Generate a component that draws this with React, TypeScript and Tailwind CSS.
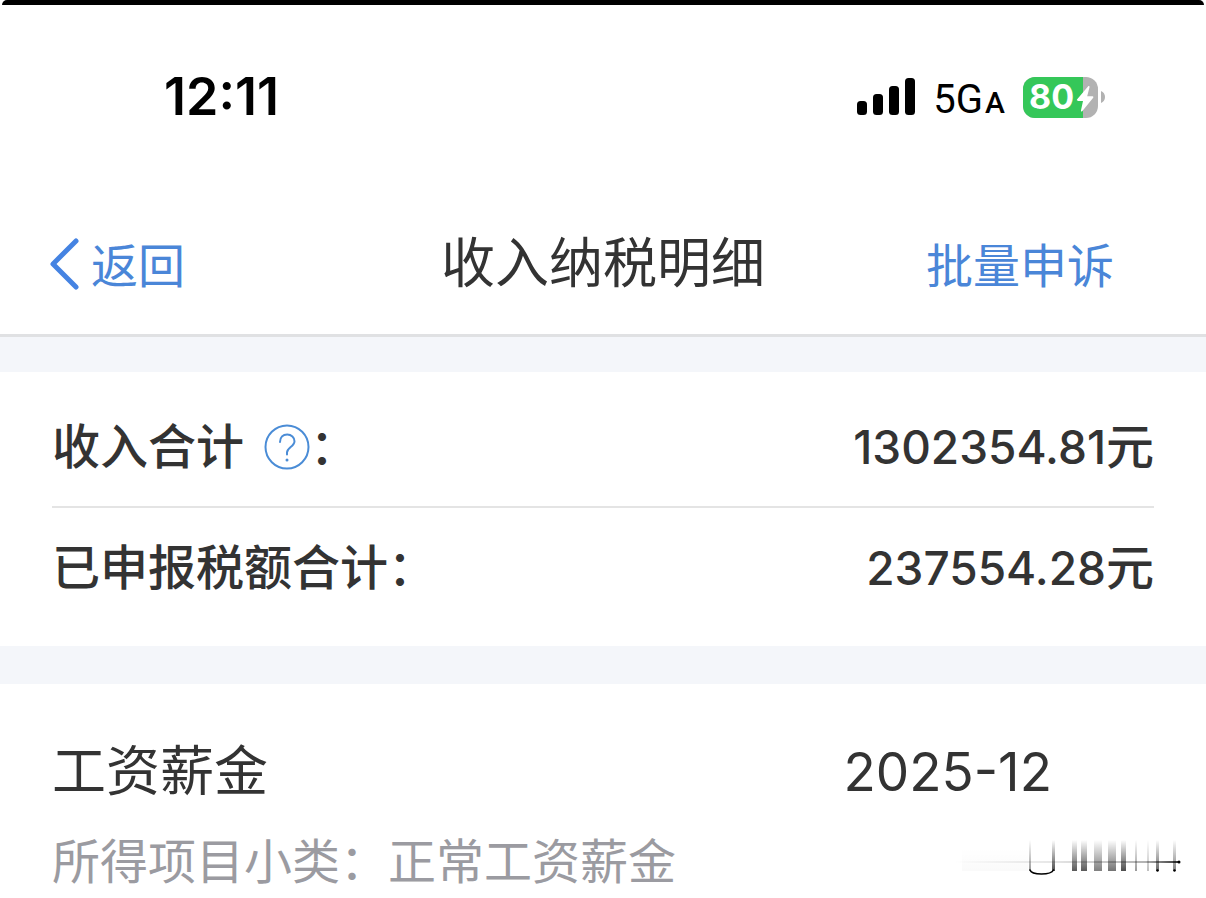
const summary = [
  { label: "收入合计", amount: "1302354.81", hasHelp: true },
  { label: "已申报税额合计", amount: "237554.28", hasHelp: false },
];

const smears = [
  { x: 118, w: 5, o: 0.65 },
  { x: 127, w: 6, o: 0.65 },
  { x: 140, w: 8, o: 0.5 },
  { x: 154, w: 8, o: 0.55 },
  { x: 167, w: 5, o: 0.7 },
  { x: 181, w: 2, o: 0.4 },
  { x: 193, w: 2, o: 0.25 },
  { x: 202, w: 3, o: 0.6 },
  { x: 219, w: 3, o: 0.5 },
];

function SignalBars() {
  return (
    <svg width="58" height="38" viewBox="0 0 58 38" aria-hidden="true">
      <rect x="0" y="23" width="10" height="14" rx="3.500" />
      <rect x="16" y="16" width="10" height="21" rx="3.500" />
      <rect x="32" y="8" width="10" height="29" rx="3.500" />
      <rect x="48" y="0" width="10" height="37" rx="3.500" />
    </svg>
  );
}

function Battery({ level }: { level: number }) {
  return (
    <div className="flex items-center gap-[3px]">
      <div className="relative flex h-[41px] w-[75px] items-center overflow-hidden rounded-xl bg-[#b2b2b2] pl-[6px]">
        <div
          className="absolute inset-y-0 left-0 bg-[#35c759]"
          style={{ width: `${level}%` }}
        />
        <span className="relative text-[34px] leading-none font-bold text-white">
          {level}
        </span>
        <svg
          className="absolute top-[9px] right-[4px]"
          width="18"
          height="26"
          viewBox="0 0 18 26"
          fill="#fff"
          aria-hidden="true"
        >
          <path d="M12 .5 1.200 13.200c-.8 1-.3 1.800.8 1.800h5L5 24.300c-.3 1.200.6 1.500 1.400.6L17 12c.8-1 .3-1.800-.8-1.800h-5l2.300-9c.3-1.100-.7-1.600-1.500-.7Z" />
        </svg>
      </div>
      <svg width="4" height="14" viewBox="0 0 4 14" aria-hidden="true">
        <path d="M0 1c2.500 1 4 3.300 4 6s-1.500 5-4 6Z" fill="#b2b2b2" />
      </svg>
    </div>
  );
}

function StatusBar() {
  return (
    <div className="flex h-[188px] items-center justify-between pr-[101px] pb-1 pl-[164px] text-black">
      <time className="text-[52px] leading-none font-semibold">12:11</time>
      <div className="flex items-center">
        <SignalBars />
        <div className="mr-[18px] ml-[18px] pt-[6px] font-['Roboto',sans-serif] text-[40px] leading-none">
          5G<span className="ml-[2px] text-[30px] font-medium">A</span>
        </div>
        <Battery level={80} />
      </div>
    </div>
  );
}

function NavBar() {
  return (
    <header className="grid h-[144px] grid-cols-[1fr_auto_1fr] items-center border-b-[3px] border-[#e0e1e3]">
      <button className="flex items-center gap-3 justify-self-start pl-[50px] text-[47px] leading-none text-[#4a86d8]">
        <svg
          width="29"
          height="52"
          viewBox="0 0 29 52"
          fill="none"
          stroke="#4583e2"
          strokeWidth="5"
          strokeLinecap="round"
          strokeLinejoin="round"
          aria-hidden="true"
        >
          <path d="M26 3 3 26l23 23" />
        </svg>
        <span className="pt-1">返回</span>
      </button>
      <h1 className="text-[54px] leading-none text-[#333]">收入纳税明细</h1>
      <button className="justify-self-end pt-1 pr-[92px] text-[47px] leading-none text-[#4a86d8]">
        批量申诉
      </button>
    </header>
  );
}

function HelpButton() {
  return (
    <button className="ml-5" aria-label="说明">
      <svg
        width="46"
        height="46"
        viewBox="0 0 46 46"
        fill="none"
        stroke="#4a8cd6"
        strokeWidth="2"
        strokeLinecap="round"
        aria-hidden="true"
      >
        <circle cx="23" cy="23" r="21.500" />
        <path d="M16 18c0-4.500 3-7.500 7.200-7.500s7.300 2.800 7.300 6.700c0 5.300-7.500 6.300-7.500 11.300v2" />
        <circle cx="23" cy="36" r="1.500" fill="#4a8cd6" stroke="none" />
      </svg>
    </button>
  );
}

// leftover of a logo, dragged upwards
function Watermark() {
  return (
    <svg width="228" height="44" viewBox="0 0 228 44" aria-hidden="true">
      <defs>
        <linearGradient id="smear" x1="0" y1="0" x2="0" y2="1">
          <stop offset="0" stopColor="#000" stopOpacity="0" />
          <stop offset="1" stopColor="#000" />
        </linearGradient>
        <linearGradient id="line" x1="0" y1="0" x2="1" y2="0">
          <stop offset="0" stopColor="#000" stopOpacity="0" />
          <stop offset="0.45" stopColor="#000" stopOpacity="0.1" />
          <stop offset="0.85" stopColor="#000" stopOpacity="0.3" />
          <stop offset="1" stopColor="#000" stopOpacity="0.8" />
        </linearGradient>
      </defs>
      <rect x="8" y="8" width="66" height="23" fill="url(#smear)" opacity="0.02" />
      <rect x="75" y="0" width="2" height="31" fill="url(#smear)" opacity="0.4" />
      <rect x="98" y="0" width="3" height="31" fill="url(#smear)" opacity="0.7" />
      <path
        d="M76 30c1 3 5 4 11.500 4S98 33 99.500 30"
        fill="none"
        stroke="#000"
        strokeWidth="1.500"
        strokeLinecap="round"
      />
      {smears.map((s) => (
        <rect
          key={s.x}
          x={s.x}
          y="0"
          width={s.w}
          height="31"
          fill="url(#smear)"
          opacity={s.o}
        />
      ))}
      <rect x="0" y="21" width="225" height="2" fill="url(#line)" />
      <circle cx="225" cy="22" r="1.500" />
      <circle cx="203.500" cy="30.500" r="1.200" />
      <circle cx="220.500" cy="30.500" r="1.200" />
    </svg>
  );
}

export default function App() {
  return (
    <div
      lang="zh-CN"
      className="bg-white font-['Inter','Noto_Sans_CJK_SC',sans-serif] text-[#333]"
    >
      <div className="mx-[2px] h-[5px] rounded-t-lg bg-black" />
      <StatusBar />
      <NavBar />

      <main className="bg-[#f4f6fa] pt-[35px]">
        <section className="bg-white px-[52px] pt-4 pb-[18px]">
          <dl className="divide-y-2 divide-[#e4e4e4] text-[48px] leading-none font-medium">
            {summary.map((row) => (
              <div
                key={row.label}
                className="flex h-[120px] items-center justify-between"
              >
                <dt className="flex items-center">
                  {row.label}
                  {row.hasHelp && <HelpButton />}：
                </dt>
                <dd>
                  <span className="text-[46px]">{row.amount}</span>元
                </dd>
              </div>
            ))}
          </dl>
        </section>

        <section className="mt-[38px] bg-white pt-[52px] pb-1 pl-[52px]">
          <div className="flex items-center justify-between pr-[154px] text-[54px] leading-[72px]">
            <h2>工资薪金</h2>
            <time dateTime="2025-12" className="text-[53px]">
              2025-12
            </time>
          </div>
          <div className="mt-[22px] flex items-center justify-between pr-6 text-[48px] leading-[64px] text-[#9b9ba1]">
            <p>所得项目小类：正常工资薪金</p>
            <Watermark />
          </div>
        </section>
      </main>
    </div>
  );
}
